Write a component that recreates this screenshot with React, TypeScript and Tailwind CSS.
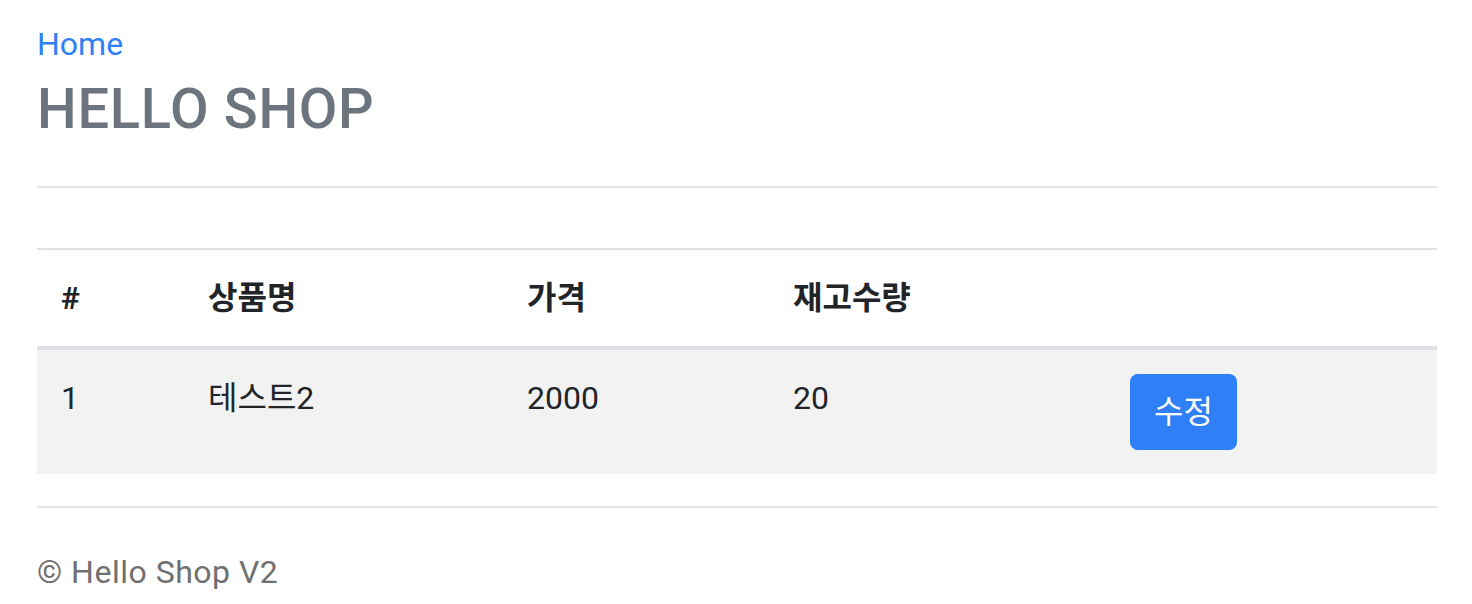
import React from "react";

export default function App() {
  const font = { fontFamily: 'Roboto, "Noto Sans CJK KR", sans-serif' };
  return (
    <div className="min-h-[604px] w-full bg-white pl-[37px] pr-[35px] pt-[20px] text-[#212529]" style={font}>
      <header>
        <a href="#" className="block text-[32px] leading-[48px] text-[#2f7ff6]">Home</a>
        <h3 className="mt-[8px] text-[56px] font-medium leading-[67px] tracking-[0.7px] text-[#6c757d]">HELLO SHOP</h3>
      </header>
      <hr className="mt-[43px] border-t-2 border-[#e5e5e5]" />
      <table className="mt-[60px] w-full table-fixed border-collapse text-[32px] leading-[48px]">
        <colgroup>
          <col className="w-[147px]" />
          <col className="w-[319px]" />
          <col className="w-[266px]" />
          <col className="w-[337px]" />
          <col />
        </colgroup>
        <thead>
          <tr className="border-t-2 border-[#dee2e6]">
            <th className="border-b-4 border-[#dee2e6] p-[24px] text-left font-bold">#</th>
            <th className="border-b-4 border-[#dee2e6] p-[24px] text-left font-bold">상품명</th>
            <th className="border-b-4 border-[#dee2e6] p-[24px] text-left font-bold">가격</th>
            <th className="border-b-4 border-[#dee2e6] p-[24px] text-left font-bold">재고수량</th>
            <th className="border-b-4 border-[#dee2e6] p-[24px] text-left font-bold"></th>
          </tr>
        </thead>
        <tbody>
          <tr className="bg-[#f2f2f2]">
            <td className="p-[24px] align-top">1</td>
            <td className="p-[24px] align-top">테스트2</td>
            <td className="p-[24px] align-top">2000</td>
            <td className="p-[24px] align-top">20</td>
            <td className="p-[24px] align-top">
              <button className="h-[76px] rounded-[8px] bg-[#2f7ff6] px-[24px] text-[32px] leading-[48px] text-white">수정</button>
            </td>
          </tr>
        </tbody>
      </table>
      <hr className="mt-[32px] border-t-2 border-[#e5e5e5]" />
      <footer className="mt-[40px] text-[32px] leading-[48px] tracking-[0.5px] text-[#707070]">© Hello Shop V2</footer>
    </div>
  );
}
